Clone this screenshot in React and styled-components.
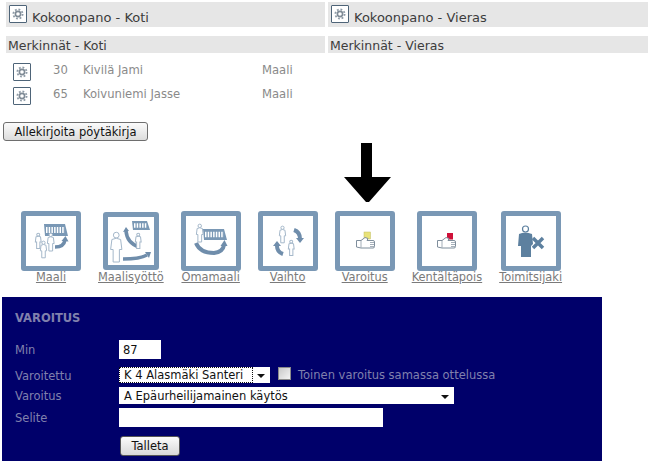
import styled, { createGlobalStyle } from "styled-components";

const GlobalStyle = createGlobalStyle`
  body {
    margin: 0;
    background: #fff;
    font-family: "DejaVu Sans", Verdana, sans-serif;
  }
`;

const Page = styled.div`
  width: 658px;
  height: 461px;
  overflow: hidden;
`;

const Teams = styled.div`
  display: grid;
  grid-template-columns: 319px 320px;
  column-gap: 3px;
  padding: 2px 0 0 6px;
  height: 103px;
`;

const TeamTitle = styled.div`
  display: flex;
  align-items: flex-end;
  gap: 5px;
  height: 25px;
  padding-left: 3px;
  background: #e6e6e6;
  color: #3c3c3c;
  font-size: 13px;
  line-height: 19px;
`;

const EventsTitle = styled.div`
  height: 17px;
  margin-top: 9px;
  background: #e6e6e6;
  color: #3c3c3c;
  font-size: 12.5px;
  line-height: 19px;
  padding-left: 2px;
`;

const GearBox = styled.span`
  display: flex;
  align-items: center;
  justify-content: center;
  box-sizing: border-box;
  flex: none;
  width: 18px;
  height: 18px;
  background: #fff;
  border: 1px solid #4e6478;
  border-radius: 1px;
  align-self: ${(p) => (p.$raised ? "flex-start" : "auto")};
  margin-top: ${(p) => (p.$raised ? 3 : 0)}px;
`;

const Events = styled.div`
  margin: 10px 0 0 7px;
`;

const EventRow = styled.div`
  display: grid;
  grid-template-columns: 40px 30px 179px auto;
  height: 24px;
  color: #8a8a8a;
  font-size: 11.6px;
  line-height: 15px;
`;

const SignButton = styled.button`
  display: block;
  box-sizing: border-box;
  width: 145px;
  height: 19px;
  margin: 17px 0 0 3px;
  padding: 0;
  border: 1px solid #6e6e6e;
  border-radius: 3px;
  background: linear-gradient(#fbfbfb, #dcdcdc);
  color: #111;
  font-family: inherit;
  font-size: 11.5px;
`;

const ArrowMark = styled.svg`
  display: block;
  margin: 2px 0 0 344px;
`;

const Actions = styled.div`
  display: flex;
  gap: 17px;
  margin-top: 9px;
  padding-left: 21px;
`;

const Action = styled.div`
  display: flex;
  flex-direction: column;
  align-items: center;
  min-width: 60px;
`;

const Tile = styled.div`
  box-sizing: border-box;
  width: ${(p) => p.$width}px;
  height: ${(p) => p.$height}px;
  margin: ${(p) => (60 - p.$height) / 2}px 0;
  border: 5px solid #7a98b5;
  border-radius: 3px;
  background: #fff;

  svg {
    display: block;
  }
`;

const ActionLink = styled.a`
  color: #7a7a7a;
  font-size: 11.4px;
  line-height: 13px;
  text-decoration: underline;
`;

const Panel = styled.div`
  box-sizing: border-box;
  width: 600px;
  height: 164px;
  margin: 13px 0 0 2px;
  padding: 14px 0 0 13px;
  background: #00006a;
  color: #8080ad;
  font-size: 11.5px;
`;

const PanelTitle = styled.div`
  font-weight: bold;
  line-height: 15px;
  margin-bottom: 14px;
`;

const FormRow = styled.div`
  display: grid;
  grid-template-columns: 104px 1fr;
  align-items: center;
  margin-bottom: ${(p) => p.$after}px;
`;

const FieldLabel = styled.span`
  padding-top: 1px;
`;

const FieldLine = styled.div`
  display: flex;
  align-items: center;
`;

const TextInput = styled.input`
  box-sizing: border-box;
  width: ${(p) => p.$width}px;
  height: 19px;
  border: 0;
  padding: 0 4px;
  background: #fff;
  color: #111;
  font-family: inherit;
  font-size: 11.5px;
`;

const SelectBox = styled.div`
  position: relative;
  box-sizing: border-box;
  width: ${(p) => p.$width}px;
  height: ${(p) => p.$height}px;
  background: #fff;
  color: #111;
  font-size: 11.5px;
  line-height: ${(p) => p.$height + 1}px;
  padding-left: 5px;

  &::after {
    content: "";
    position: absolute;
    right: 5px;
    top: ${(p) => p.$height / 2 - 1}px;
    border-left: 4px solid transparent;
    border-right: 4px solid transparent;
    border-top: 4px solid #111;
  }
`;

const FocusRing = styled.span`
  position: absolute;
  left: 0;
  top: 0;
  bottom: 0;
  right: 17px;
  border: 1px dotted #111;
`;

const CheckBox = styled.span`
  box-sizing: border-box;
  flex: none;
  width: 13px;
  height: 13px;
  margin: -3px 7px 0 8px;
  border: 1px solid #8a8a8a;
  background: linear-gradient(135deg, #c8c8c8, #f4f4f4);
`;

const SaveButton = styled.button`
  display: block;
  box-sizing: border-box;
  width: 60px;
  height: 20px;
  margin-left: 105px;
  padding: 0;
  border: 1px solid #555;
  border-radius: 3px;
  background: linear-gradient(#fbfbfb, #d8d8d8);
  color: #111;
  font-family: inherit;
  font-size: 11.5px;
`;

const Gear = () => (
  <svg width="12" height="12" viewBox="0 0 12 12">
    <circle cx="6" cy="6" r="4.6" fill="none" stroke="#8d9aa6" strokeWidth="1.8" strokeDasharray="1.8 1.8" />
    <circle cx="6" cy="6" r="2.6" fill="none" stroke="#7f8b96" strokeWidth="1.6" />
  </svg>
);

const Person = ({ x, y, s = 1 }) => (
  <g transform={`translate(${x} ${y}) scale(${s})`} fill="#fff" stroke="#a5b8ca" strokeWidth={1 / s}>
    <circle cx="5" cy="2.5" r="2.3" />
    <path d="M1.500 6 Q5 4 8.500 6 L9.500 14 L7.500 14 L7.500 24 L2.500 24 L2.500 14 L.5 14 Z" />
  </g>
);

const Banner = ({ x, y, w, h }) => (
  <g>
    <path d={`M${x} ${y} L${x + w - 3} ${y} L${x + w} ${y + h} L${x + 1} ${y + h} Z`} fill="#7a98b5" />
    <path d={`M${x + 2} ${y + h / 2} H${x + w - 3}`} stroke="#fff" strokeWidth={h * 0.5} strokeDasharray="1.5 1.2" />
  </g>
);

// curved arrow with its head drawn as a separate triangle
const Curve = ({ d, head, width = 3.5 }) => (
  <g>
    <path d={d} fill="none" stroke="#6f8dab" strokeWidth={width} />
    {head && <path d={head} fill="#6f8dab" />}
  </g>
);

const Hand = ({ x, y }) => (
  <g transform={`translate(${x} ${y})`} fill="#fff" stroke="#7f8e9c" strokeWidth="1">
    <path d="M.5 3.500 H5 L9 .5 L12 1.500 L11 3.500 H17 Q18.500 3.500 18.500 5 V9.500 Q18.500 11 17 11 H5 L.5 10 Z" />
    <path d="M5 3.500 V10.500 M14 5.500 H18 M14 7.500 H18 M14 9.500 H18" strokeWidth="0.7" />
  </g>
);

const Art = ({ w = 50, h = 50, children }) => (
  <svg width={w} height={h} viewBox={`0 0 ${w} ${h}`}>
    {children}
  </svg>
);

const actions = [
  {
    label: "Maali",
    art: (
      <Art>
        <Banner x={18} y={8} w={24} h={12} />
        <Person x={9} y={17} s={0.65} />
        <Person x={14} y={25} s={0.7} />
        <Person x={21} y={17} s={0.75} />
        <Curve d="M29 31 Q38 31 39 24" head="M35.500 25 L39.500 20 L42.500 25.500 Z" />
      </Art>
    ),
  },
  {
    label: "Maalisyöttö",
    width: 56,
    height: 58,
    art: (
      <Art w={46} h={48}>
        <Banner x={24} y={4} w={18} h={9} />
        <Curve d="M18 14 Q19 26 31 30" head="M15 15 L18 10 L21 14 Z" />
        <Person x={2} y={15} s={1.25} />
        <Person x={27} y={16} s={0.65} />
        <Curve d="M15 42 Q32 42 39 38" head="M37 35 L43 35 L41 41 Z" />
      </Art>
    ),
  },
  {
    label: "Omamaali",
    art: (
      <Art>
        <Banner x={17} y={13} w={24} h={11} />
        <Person x={10} y={8} s={0.75} />
        <Curve d="M10 27 Q14 37 28 37 Q37 36 38 29" width={4} head="M34.500 30 L38.500 24 L41.500 30 Z" />
      </Art>
    ),
  },
  {
    label: "Vaihto",
    art: (
      <Art>
        <Person x={16} y={10} s={0.7} />
        <Person x={25} y={24} s={0.65} />
        <Curve d="M31 14 Q37 16 37 23" width={4} head="M33 22 L41 22 L37 27 Z" />
        <Curve d="M20 38 Q14 36 14 30" width={4} head="M10 30 L18 30 L14 25 Z" />
      </Art>
    ),
  },
  {
    label: "Varoitus",
    art: (
      <Art>
        <rect x="24" y="16" width="6.500" height="7" fill="#e8e27a" stroke="#c2be62" strokeWidth="0.500" />
        <Hand x={16} y={21} />
      </Art>
    ),
  },
  {
    label: "Kentältäpois",
    art: (
      <Art>
        <rect x="25" y="17" width="6" height="6.500" fill="#cf1038" />
        <Hand x={15} y={21} />
      </Art>
    ),
  },
  {
    label: "Toimitsijaki",
    art: (
      <Art>
        <circle cx="19.500" cy="13" r="3" fill="#fff" stroke="#5d809f" strokeWidth="1.200" />
        <path d="M13 18 Q19 15 26 18 L27 28 L25 30 L25 41 L15 41 L15 30 L12 30 Z" fill="#5d809f" />
        <path d="M27 22 L37 32 M37 22 L27 32" stroke="#5d809f" strokeWidth="3.500" />
      </Art>
    ),
  },
];

const App = () => (
  <Page>
    <GlobalStyle />
    <Teams>
      <div>
        <TeamTitle>
          <GearBox $raised>
            <Gear />
          </GearBox>
          Kokoonpano - Koti
        </TeamTitle>
        <EventsTitle>Merkinnät - Koti</EventsTitle>
        <Events>
          <EventRow>
            <GearBox>
              <Gear />
            </GearBox>
            <span>30</span>
            <span>Kivilä Jami</span>
            <span>Maali</span>
          </EventRow>
          <EventRow>
            <GearBox>
              <Gear />
            </GearBox>
            <span>65</span>
            <span>Koivuniemi Jasse</span>
            <span>Maali</span>
          </EventRow>
        </Events>
      </div>
      <div>
        <TeamTitle>
          <GearBox $raised>
            <Gear />
          </GearBox>
          Kokoonpano - Vieras
        </TeamTitle>
        <EventsTitle>Merkinnät - Vieras</EventsTitle>
      </div>
    </Teams>
    <SignButton>Allekirjoita pöytäkirja</SignButton>
    <ArrowMark width="47" height="59" viewBox="0 0 47 59">
      <path d="M17 0 H28 V34 H47 L25 59 H22 L0 34 H17 Z" fill="#000" />
    </ArrowMark>
    <Actions>
      {actions.map((action) => (
        <Action key={action.label}>
          <Tile $width={action.width || 60} $height={action.height || 60}>
            {action.art}
          </Tile>
          <ActionLink>{action.label}</ActionLink>
        </Action>
      ))}
    </Actions>
    <Panel>
      <PanelTitle>VAROITUS</PanelTitle>
      <FormRow $after={8}>
        <FieldLabel>Min</FieldLabel>
        <TextInput $width={42} defaultValue="87" />
      </FormRow>
      <FormRow $after={4}>
        <FieldLabel>Varoitettu</FieldLabel>
        <FieldLine>
          <SelectBox $width={151} $height={16}>
            <FocusRing />K 4 Alasmäki Santeri
          </SelectBox>
          <CheckBox />
          Toinen varoitus samassa ottelussa
        </FieldLine>
      </FormRow>
      <FormRow $after={4}>
        <FieldLabel>Varoitus</FieldLabel>
        <SelectBox $width={335} $height={17}>
          A Epäurheilijamainen käytös
        </SelectBox>
      </FormRow>
      <FormRow $after={9}>
        <FieldLabel>Selite</FieldLabel>
        <TextInput $width={264} />
      </FormRow>
      <SaveButton>Talleta</SaveButton>
    </Panel>
  </Page>
);

export default App;
